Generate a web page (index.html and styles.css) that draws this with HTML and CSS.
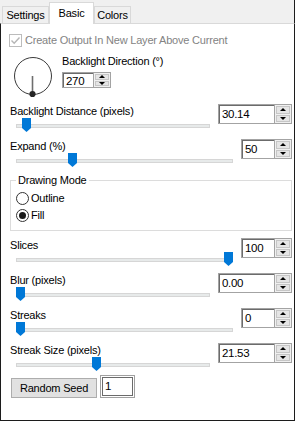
FILE: index.html
```html
<!DOCTYPE html>
<html>
<head>
<meta charset="utf-8">
<link rel="stylesheet" href="styles.css">
</head>
<body>
<div class="win">
  <div class="tabstrip">
    <div class="tab tab-settings">Settings</div>
    <div class="tab tab-active">Basic</div>
    <div class="tab tab-colors">Colors</div>
  </div>
  <div class="page">
    <div class="check disabled">
      <span class="checkbox"><svg width="11" height="11" viewBox="0 0 11 11"><polyline points="1.5,5.5 4.2,8.2 9.5,2.5" fill="none" stroke="#b5b5b5" stroke-width="1.4"/></svg></span>
      <span>Create Output In New Layer Above Current</span>
    </div>
    <div class="dir">
      <svg class="dial" width="40" height="42" viewBox="0 0 40 42">
        <circle cx="20" cy="20" r="18.5" fill="none" stroke="#3a3a3a" stroke-width="1"/>
        <line x1="19.5" y1="20" x2="19.5" y2="37" stroke="#6e6e6e" stroke-width="1.6"/>
        <circle cx="19.5" cy="38" r="3.1" fill="#262626"/>
      </svg>
      <div class="dir-col">
        <div class="label">Backlight Direction (°)</div>
        <div class="spin spin-sm">
          <div class="spin-field">270</div>
          <div class="spin-btns"><span class="spin-btn up"></span><span class="spin-btn down"></span></div>
        </div>
      </div>
    </div>

    <div class="row">
      <div class="label">Backlight Distance (pixels)</div>
      <div class="slider"><div class="track"></div><div class="thumb" style="left:6px"></div></div>
      <div class="spin spin-wide">
        <div class="spin-field">30.14</div>
        <div class="spin-btns"><span class="spin-btn up"></span><span class="spin-btn down"></span></div>
      </div>
    </div>

    <div class="row">
      <div class="label">Expand (%)</div>
      <div class="slider"><div class="track"></div><div class="thumb" style="left:52px"></div></div>
      <div class="spin spin-narrow">
        <div class="spin-field">50</div>
        <div class="spin-btns"><span class="spin-btn up"></span><span class="spin-btn down"></span></div>
      </div>
    </div>

    <fieldset class="group">
      <legend class="group-title">Drawing Mode</legend>
      <div class="radio"><span class="radio-dot"></span><span>Outline</span></div>
      <div class="radio radio-checked"><span class="radio-dot"></span><span>Fill</span></div>
    </fieldset>

    <div class="row row-after-group">
      <div class="label">Slices</div>
      <div class="slider"><div class="track"></div><div class="thumb" style="left:208px"></div></div>
      <div class="spin spin-narrow">
        <div class="spin-field">100</div>
        <div class="spin-btns"><span class="spin-btn up"></span><span class="spin-btn down"></span></div>
      </div>
    </div>

    <div class="row">
      <div class="label">Blur (pixels)</div>
      <div class="slider"><div class="track"></div><div class="thumb" style="left:0px"></div></div>
      <div class="spin spin-wide">
        <div class="spin-field">0.00</div>
        <div class="spin-btns"><span class="spin-btn up"></span><span class="spin-btn down"></span></div>
      </div>
    </div>

    <div class="row">
      <div class="label">Streaks</div>
      <div class="slider"><div class="track"></div><div class="thumb" style="left:0px"></div></div>
      <div class="spin spin-narrow">
        <div class="spin-field">0</div>
        <div class="spin-btns"><span class="spin-btn up"></span><span class="spin-btn down"></span></div>
      </div>
    </div>

    <div class="row">
      <div class="label">Streak Size (pixels)</div>
      <div class="slider"><div class="track"></div><div class="thumb" style="left:76px"></div></div>
      <div class="spin spin-wide">
        <div class="spin-field">21.53</div>
        <div class="spin-btns"><span class="spin-btn up"></span><span class="spin-btn down"></span></div>
      </div>
    </div>

    <div class="seed-row">
      <div class="btn">Random Seed</div>
      <div class="seed">1</div>
    </div>
  </div>
</div>
</body>
</html>
```

FILE: styles.css
```css
html, body {
  margin: 0;
  padding: 0;
  background: #ffffff;
}

body {
  font-family: "Liberation Sans", Arial, sans-serif;
  font-size: 11px;
  line-height: 13px;
  letter-spacing: -0.2px;
  color: #000;
  width: 296px;
  height: 422px;
  overflow: hidden;
}

.win {
  width: 295px;
}

/* ---------- tabs ---------- */
.tabstrip {
  height: 23px;
  box-sizing: border-box;
  background: #f0f0f0;
  border-right: 1px solid #1c1c1c;
  display: flex;
  align-items: flex-end;
  padding-left: 2px;
}

.tab {
  height: 17px;
  box-sizing: border-box;
  border: 1px solid #d9d9d9;
  border-bottom: none;
  background: #f0f0f0;
  display: flex;
  align-items: center;
  justify-content: center;
}

.tab-settings {
  width: 47px;
}

.tab-active {
  width: 45px;
  height: 22px;
  margin-bottom: -1px;
  background: #ffffff;
  position: relative;
  z-index: 1;
}

.tab-colors {
  width: 37px;
}

/* ---------- page ---------- */
.page {
  height: 398px;
  box-sizing: border-box;
  border-top: 1px solid #d9d9d9;
  border-left: 1px solid #1c1c1c;
  border-right: 1px solid #1c1c1c;
  border-bottom: 1px solid #1c1c1c;
  padding: 0 2px 0 9px;
  background: #fff;
}

.label {
  line-height: 13px;
  white-space: nowrap;
}

/* checkbox */
.check {
  display: flex;
  align-items: center;
  gap: 3px;
  height: 13px;
  margin-top: 10px;
  margin-left: -1px;
}

.disabled {
  color: #838383;
}

.checkbox {
  width: 13px;
  height: 13px;
  box-sizing: border-box;
  border: 1px solid #bcbcbc;
  background: #fff;
  display: flex;
  align-items: center;
  justify-content: center;
}

/* direction */
.dir {
  display: flex;
  gap: 9px;
  height: 49px;
  margin-top: 8px;
  margin-left: 3px;
}

.dial {
  margin-top: 1px;
  display: block;
}

.dir-col {
  display: flex;
  flex-direction: column;
  gap: 4px;
}

/* spin boxes */
.spin {
  display: flex;
  height: 20px;
  box-sizing: border-box;
  border: 1px solid #a3a3a3;
  background: #fff;
}

.spin-wide {
  width: 74px;
}

.spin-narrow {
  width: 51px;
}

.spin-sm {
  width: 49px;
  height: 16px;
}

.spin-field {
  flex: 1;
  border-top: 1px solid #6b6b6b;
  border-left: 1px solid #6b6b6b;
  padding-left: 2px;
  line-height: 17px;
  font-size: 11.5px;
  letter-spacing: -0.3px;
}

.spin-sm .spin-field {
  line-height: 14px;
}

.spin-btns {
  width: 17px;
  box-sizing: border-box;
  display: flex;
  flex-direction: column;
  gap: 1px;
  padding: 1px;
  background: #f0f0f0;
  border-left: 1px solid #a3a3a3;
}

.spin-btn {
  flex: 1;
  background: #e5e5e5;
  border: 1px solid #c6c6c6;
  display: flex;
  align-items: center;
  justify-content: center;
}

.spin-btn::before {
  content: "";
  border-left: 3px solid transparent;
  border-right: 3px solid transparent;
}

.up::before {
  border-bottom: 3px solid #000;
}

.down::before {
  border-top: 3px solid #000;
}

/* rows */
.row {
  display: grid;
  grid-template-columns: 1fr auto;
  grid-template-rows: 14px 15px;
  column-gap: 8px;
  height: 35px;
}

.row .label {
  grid-column: 1;
  grid-row: 1;
  margin-top: 1px;
}

.row .slider {
  grid-column: 1;
  grid-row: 2;
}

.row .spin {
  grid-column: 2;
  grid-row: 1 / 3;
  align-self: start;
}

.row-after-group {
  margin-top: 7px;
}

.slider {
  position: relative;
  margin-left: 6px;
  height: 15px;
}

.track {
  margin-top: 6px;
  height: 4px;
  box-sizing: border-box;
  border: 1px solid #d6d6d6;
  background: #e7eaea;
}

.thumb {
  position: absolute;
  top: 0;
  width: 9px;
  height: 14px;
  background: #0078d7;
  clip-path: polygon(0 0, 100% 0, 100% 72%, 50% 100%, 0 72%);
}

/* group */
.group {
  margin: 0;
  padding: 5px 5px 8px 5px;
  border: 1px solid #dcdcdc;
  min-inline-size: 0;
}

.group-title {
  padding: 0 2px;
  line-height: 13px;
}

.radio {
  display: flex;
  align-items: center;
  gap: 2px;
  height: 13px;
}

.radio + .radio {
  margin-top: 4px;
}

.radio-dot {
  width: 13px;
  height: 13px;
  box-sizing: border-box;
  border: 1px solid #333;
  border-radius: 50%;
  background: #fff;
  display: flex;
  align-items: center;
  justify-content: center;
}

.radio-checked .radio-dot::after {
  content: "";
  width: 7px;
  height: 7px;
  border-radius: 50%;
  background: #1a1a1a;
}

/* seed row */
.seed-row {
  display: flex;
  align-items: flex-end;
  gap: 3px;
  margin-left: 1px;
  margin-top: -3px;
}

.btn {
  width: 86px;
  height: 20px;
  box-sizing: border-box;
  border: 1px solid #adadad;
  background: #e1e1e1;
  text-align: center;
  line-height: 18px;
}

.seed {
  width: 35px;
  height: 23px;
  box-sizing: border-box;
  border: 1px solid #a0a0a0;
  box-shadow: inset 0 0 0 1px #fff, inset 0 0 0 2px #6b6b6b;
  padding-left: 4px;
  line-height: 21px;
  font-size: 11.5px;
}
```
